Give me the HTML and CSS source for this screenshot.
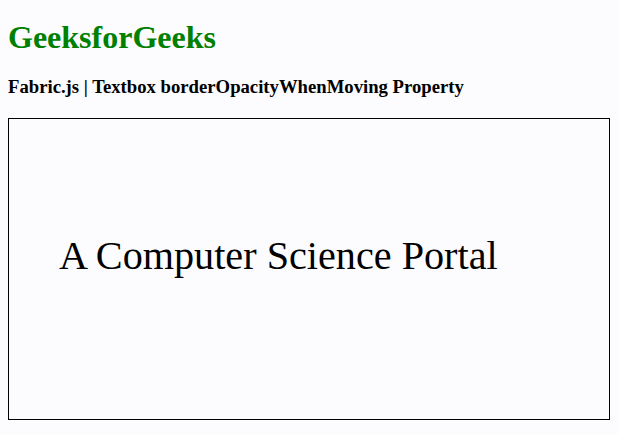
FILE: index.html
```html
<!DOCTYPE html>
<html>
<head>
<meta charset="utf-8">
<link rel="stylesheet" href="styles.css">
</head>
<body>
<h1 class="title">GeeksforGeeks</h1>
<h3 class="subtitle">Fabric.js | Textbox borderOpacityWhenMoving Property</h3>
<div class="canvas">
  <span class="textbox">A Computer Science Portal</span>
</div>
</body>
</html>
```
FILE: styles.css
```css
html, body {
  background: #fcfcff;
}
body {
  margin: 8px;
  font-family: "Liberation Serif", "Times New Roman", serif;
  color: #000;
}
.title {
  color: green;
  font-size: 32px;
  margin: 11px 0 20px;
}
.subtitle {
  font-size: 18.7px;
  margin: 0 0 20px;
}
.canvas {
  position: relative;
  width: 600px;
  height: 300px;
  border: 1px solid #000;
}
.textbox {
  position: absolute;
  left: 50px;
  top: 114px;
  font-size: 40.2px;
  line-height: 46px;
  white-space: nowrap;
}
```
